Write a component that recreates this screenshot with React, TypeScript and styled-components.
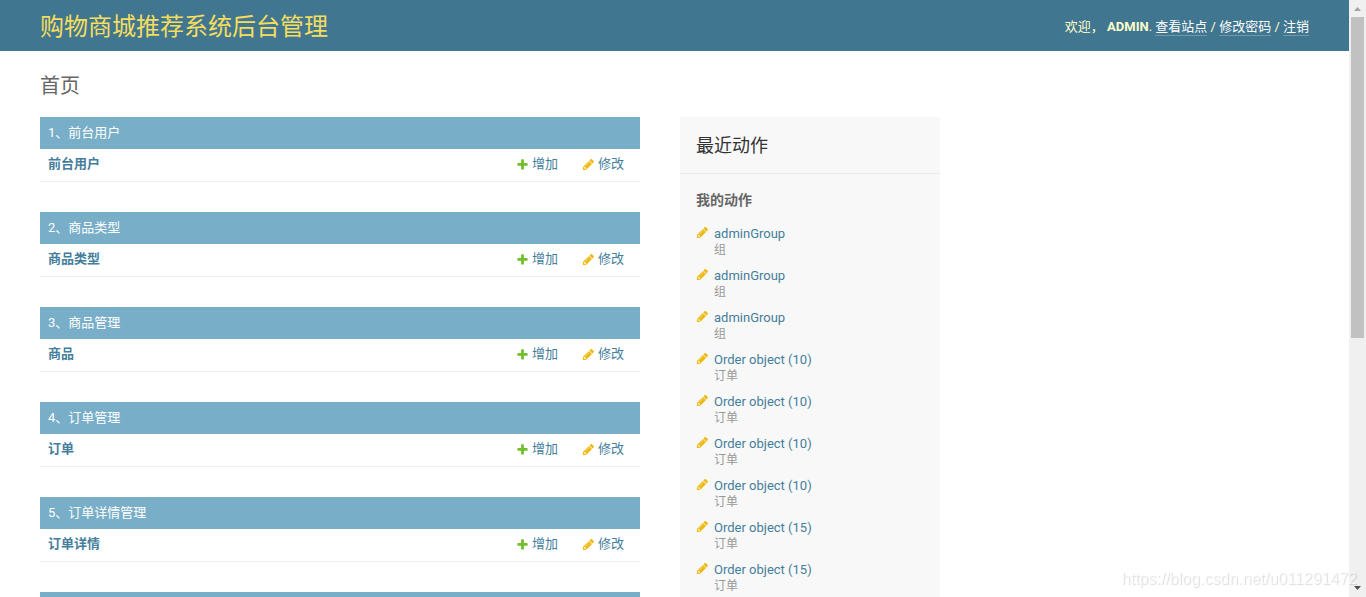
import React from 'react';
import styled, { createGlobalStyle } from 'styled-components';

const GlobalStyle = createGlobalStyle`
  *, *::before, *::after { box-sizing: border-box; }
  body {
    margin: 0;
    background: #fff;
    color: #333;
    font-family: Roboto, "Noto Sans CJK SC", sans-serif;
    font-size: 13px;
    overflow: hidden;
  }
  a { color: #447e9b; text-decoration: none; }
  h1, h2, h3, ul, p { margin: 0; padding: 0; }
`;

const Shell = styled.div`
  display: flex;
  height: 100vh;
  overflow: hidden;
`;

const Page = styled.div`
  flex: 1;
  min-width: 0;
  overflow: hidden;
`;

const Header = styled.header`
  display: flex;
  align-items: center;
  justify-content: space-between;
  padding: 11px 40px 8px;
  background: #417690;
  color: #ffc;
`;

const SiteName = styled.h1`
  font-size: 24px;
  line-height: 32px;
  font-weight: 400;
  a { color: #f5dd5d; }
`;

const UserTools = styled.nav`
  font-size: 13px;
  line-height: 16px;
  white-space: pre;
`;

const ToolLink = styled.a`
  display: inline-block;
  color: #fff;
  border-bottom: 1px solid rgba(255, 255, 255, 0.25);
`;

const Content = styled.main`
  padding: 20px 40px;
`;

const PageTitle = styled.h1`
  font-size: 20px;
  line-height: 30px;
  font-weight: 400;
  color: #666;
  margin-bottom: 16px;
`;

const Columns = styled.div`
  display: flex;
  align-items: flex-start;
  gap: 40px;
`;

const Modules = styled.div`
  flex: 0 1 600px;
`;

const ModuleTable = styled.table`
  width: 100%;
  border-collapse: collapse;
  margin-bottom: 30px;
`;

const Caption = styled.caption`
  height: 32px;
  padding: 8px;
  background: #79aec8;
  text-align: left;
  font-size: 13px;
  line-height: 16px;
  a { color: #fff; }
`;

const NameCell = styled.th`
  padding: 7px 8px 9px;
  border-bottom: 1px solid #eee;
  text-align: left;
  font-weight: 600;
  line-height: 16px;
`;

const ActionCell = styled.td`
  width: 66px;
  padding: 7px 16px 9px 8px;
  border-bottom: 1px solid #eee;
  line-height: 16px;
`;

const ActionLink = styled.a`
  display: flex;
  align-items: center;
  gap: 3px;
  white-space: nowrap;
`;

const Sidebar = styled.aside`
  flex: 0 0 260px;
  background: #f8f8f8;
`;

const SidebarTitle = styled.h2`
  padding: 17px 16px 15px;
  border-bottom: 1px solid #eaeaea;
  font-size: 18px;
  line-height: 24px;
  font-weight: 400;
`;

const SidebarSubtitle = styled.h3`
  padding: 16px;
  font-size: 14px;
  line-height: 20px;
  font-weight: 700;
  color: #666;
`;

const ActionList = styled.ul`
  display: flex;
  flex-direction: column;
  gap: 10px;
  padding: 0 16px 16px;
  list-style: none;
`;

const ActionItem = styled.li`
  display: flex;
  gap: 5px;
  line-height: 16px;
`;

const ItemText = styled.div`
  display: flex;
  flex-direction: column;
`;

const Kind = styled.span`
  font-size: 12px;
  color: #999;
`;

const ScrollTrack = styled.div`
  flex: 0 0 17px;
  display: flex;
  flex-direction: column;
  align-items: center;
  background: #f0f0f0;
`;

const Arrow = styled.svg`
  display: block;
  width: 17px;
  height: 17px;
`;

const ThumbArea = styled.div`
  flex: 1;
  width: 13px;
`;

const Thumb = styled.div`
  height: 57%;
  background: #c1c1c1;
`;

const Watermark = styled.div`
  position: fixed;
  right: 9px;
  bottom: 8px;
  font-family: "Liberation Sans", Arial, sans-serif;
  font-size: 16px;
  line-height: 20px;
  color: rgba(255, 255, 255, 0.6);
  text-shadow: 1px 1px 1px rgba(0, 0, 0, 0.14);
  pointer-events: none;
`;

const PlusIcon = () => (
  <svg width="13" height="13" viewBox="0 0 1792 1792" aria-hidden="true">
    <path fill="#70bf2b" d="M1600 796v192q0 40-28 68t-68 28h-416v416q0 40-28 68t-68 28h-192q-40 0-68-28t-28-68v-416h-416q-40 0-68-28t-28-68v-192q0-40 28-68t68-28h416v-416q0-40 28-68t68-28h192q40 0 68 28t28 68v416h416q40 0 68 28t28 68z" />
  </svg>
);

const PencilIcon = () => (
  <svg width="13" height="13" viewBox="0 0 1792 1792" aria-hidden="true">
    <path fill="#efb80b" d="M491 1536l91-91-235-235-91 91v107h128v128h107zm523-928q0-22-22-22-10 0-17 7l-542 542q-7 7-7 17 0 22 22 22 10 0 17-7l542-542q7-7 7-17zm-54-192l416 416-832 832h-416v-416zm683 96q0 53-37 90l-166 166-416-416 166-165q36-38 90-38 53 0 91 38l235 234q37 39 37 91z" />
  </svg>
);

const modules = [
  { title: '1、前台用户', model: '前台用户' },
  { title: '2、商品类型', model: '商品类型' },
  { title: '3、商品管理', model: '商品' },
  { title: '4、订单管理', model: '订单' },
  { title: '5、订单详情管理', model: '订单详情' },
];

const recent = [
  { name: 'adminGroup', kind: '组' },
  { name: 'adminGroup', kind: '组' },
  { name: 'adminGroup', kind: '组' },
  { name: 'Order object (10)', kind: '订单' },
  { name: 'Order object (10)', kind: '订单' },
  { name: 'Order object (10)', kind: '订单' },
  { name: 'Order object (10)', kind: '订单' },
  { name: 'Order object (15)', kind: '订单' },
  { name: 'Order object (15)', kind: '订单' },
];

export default function App() {
  return (
    <>
      <GlobalStyle />
      <Shell>
        <Page>
          <Header>
            <SiteName><a href="#home">购物商城推荐系统后台管理</a></SiteName>
            <UserTools>
              {'欢迎， '}<strong>ADMIN</strong>{'. '}
              <ToolLink href="#site">查看站点</ToolLink>{' / '}
              <ToolLink href="#password">修改密码</ToolLink>{' / '}
              <ToolLink href="#logout">注销</ToolLink>
            </UserTools>
          </Header>
          <Content>
            <PageTitle>首页</PageTitle>
            <Columns>
              <Modules>
                {modules.map((m) => (
                  <ModuleTable key={m.title}>
                    <Caption><a href="#section">{m.title}</a></Caption>
                    <tbody>
                      <tr>
                        <NameCell scope="row"><a href="#list">{m.model}</a></NameCell>
                        <ActionCell><ActionLink href="#add"><PlusIcon />增加</ActionLink></ActionCell>
                        <ActionCell><ActionLink href="#change"><PencilIcon />修改</ActionLink></ActionCell>
                      </tr>
                    </tbody>
                  </ModuleTable>
                ))}
                <ModuleTable><Caption /></ModuleTable>
              </Modules>
              <Sidebar>
                <SidebarTitle>最近动作</SidebarTitle>
                <SidebarSubtitle>我的动作</SidebarSubtitle>
                <ActionList>
                  {recent.map((r, i) => (
                    <ActionItem key={i}>
                      <PencilIcon />
                      <ItemText>
                        <a href="#entry">{r.name}</a>
                        <Kind>{r.kind}</Kind>
                      </ItemText>
                    </ActionItem>
                  ))}
                </ActionList>
              </Sidebar>
            </Columns>
          </Content>
        </Page>
        <ScrollTrack aria-hidden="true">
          <Arrow viewBox="0 0 17 17"><path fill="#a3a3a3" d="M5 11h7L8.500 7z" /></Arrow>
          <ThumbArea><Thumb /></ThumbArea>
          <Arrow viewBox="0 0 17 17"><path fill="#505050" d="M5 6h7L8.500 10z" /></Arrow>
        </ScrollTrack>
      </Shell>
      <Watermark>https://blog.csdn.net/u011291472</Watermark>
    </>
  );
}
